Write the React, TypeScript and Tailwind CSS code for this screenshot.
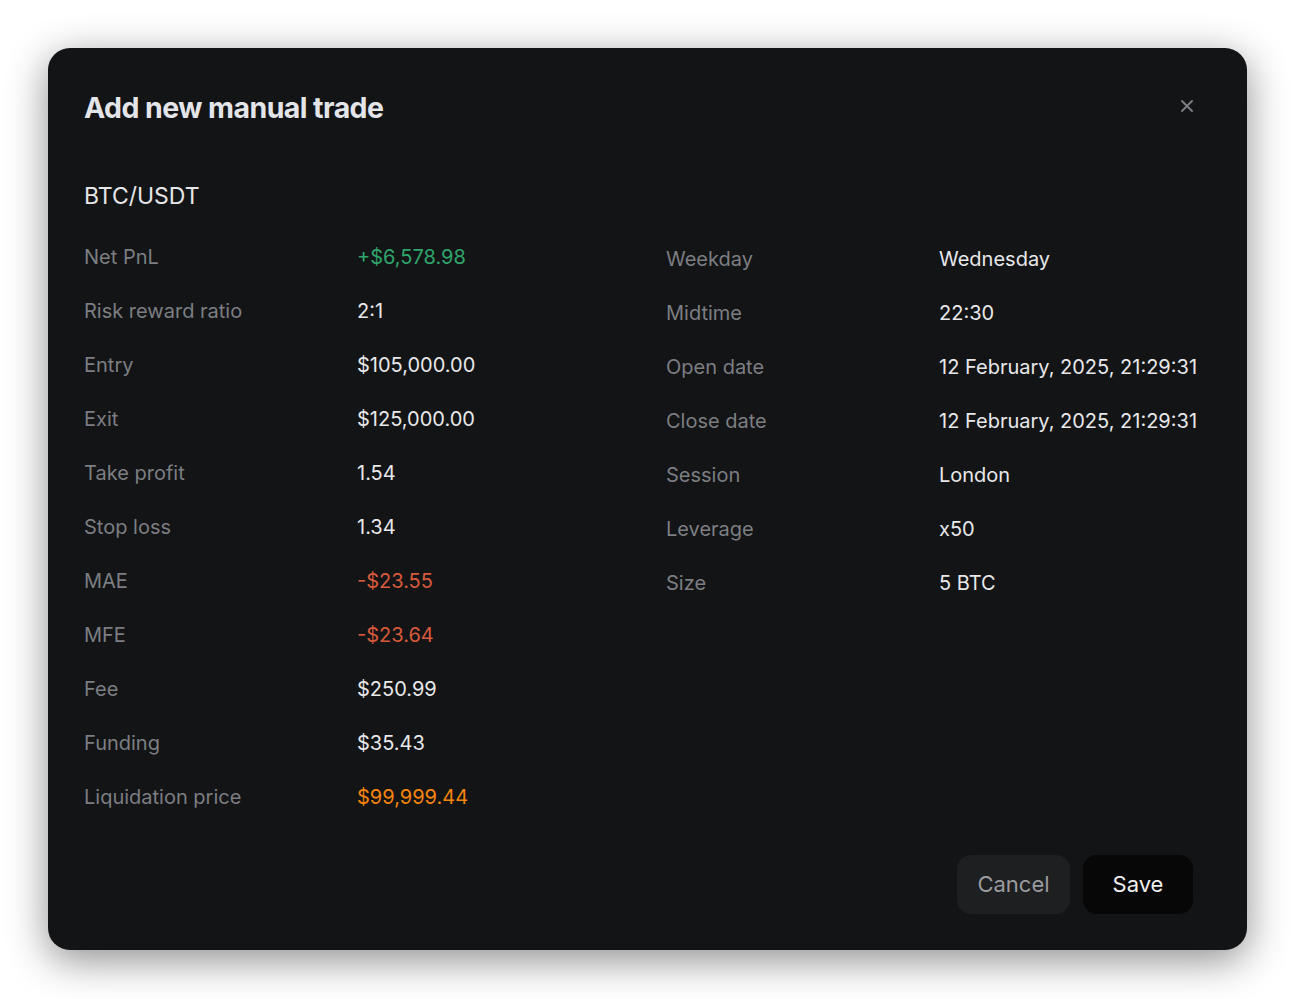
import React from 'react';

type Row = { label: string; value: string; tone?: 'green' | 'red' | 'orange' };

const left: Row[] = [
  { label: 'Net PnL', value: '+$6,578.98', tone: 'green' },
  { label: 'Risk reward ratio', value: '2:1' },
  { label: 'Entry', value: '$105,000.00' },
  { label: 'Exit', value: '$125,000.00' },
  { label: 'Take profit', value: '1.54' },
  { label: 'Stop loss', value: '1.34' },
  { label: 'MAE', value: '-$23.55', tone: 'red' },
  { label: 'MFE', value: '-$23.64', tone: 'red' },
  { label: 'Fee', value: '$250.99' },
  { label: 'Funding', value: '$35.43' },
  { label: 'Liquidation price', value: '$99,999.44', tone: 'orange' },
];

const right: Row[] = [
  { label: 'Weekday', value: 'Wednesday' },
  { label: 'Midtime', value: '22:30' },
  { label: 'Open date', value: '12 February, 2025, 21:29:31' },
  { label: 'Close date', value: '12 February, 2025, 21:29:31' },
  { label: 'Session', value: 'London' },
  { label: 'Leverage', value: 'x50' },
  { label: 'Size', value: '5 BTC' },
];

function toneClass(t?: Row['tone']) {
  if (t === 'green') return 'text-[#2fa56b]';
  if (t === 'red') return 'text-[#d85a3c]';
  if (t === 'orange') return 'text-[#f7850d]';
  return 'text-[#e8e8ea]';
}

function Rows({ rows }: { rows: Row[] }) {
  return (
    <div className="flex flex-col gap-[30px]">
      {rows.map(r => (
        <div key={r.label} className="grid grid-cols-[273px_1fr] items-center h-6 text-[20px] leading-6">
          <span className="text-[#7c7e82]">{r.label}</span>
          <span className={toneClass(r.tone)}>{r.value}</span>
        </div>
      ))}
    </div>
  );
}

export default function App() {
  return (
    <div className="min-h-[999px] w-full bg-white p-12 font-['Inter','Liberation_Sans',sans-serif]">
      <div className="h-[902px] w-[1199px] rounded-[22px] bg-[#131416] shadow-[0_10px_40px_rgba(0,0,0,0.45)] px-9 pt-[42px] pb-9 flex flex-col">
        <div className="flex items-start justify-between">
          <h1 className="text-[28.5px] leading-9 font-bold tracking-[-0.02em] text-[#e4e5e9]">Add new manual trade</h1>
          <button className="mt-2 mr-4 text-[#7a7c80]">
            <svg width="16" height="16" viewBox="0 0 16 16" fill="none" stroke="currentColor" strokeWidth="2" strokeLinecap="round"><path d="M3 3l10 10M13 3L3 13"/></svg>
          </button>
        </div>

        <div className="mt-[56px] text-[23px] leading-7 text-[#e6e6e8]">BTC/USDT</div>

        <div className="mt-[35px] grid grid-cols-[582px_1fr]">
          <Rows rows={left} />
          <div className="mt-0.5">
            <Rows rows={right} />
          </div>
        </div>

        <div className="mt-auto flex justify-end gap-[13px] pr-[18px]">
          <button className="h-[59px] w-[113px] rounded-[14px] bg-[#1e1f21] text-[22px] text-[#9a9b9e]">Cancel</button>
          <button className="h-[59px] w-[110px] rounded-[14px] bg-[#070707] text-[22px] text-[#f0f0f0]">Save</button>
        </div>
      </div>
    </div>
  );
}
